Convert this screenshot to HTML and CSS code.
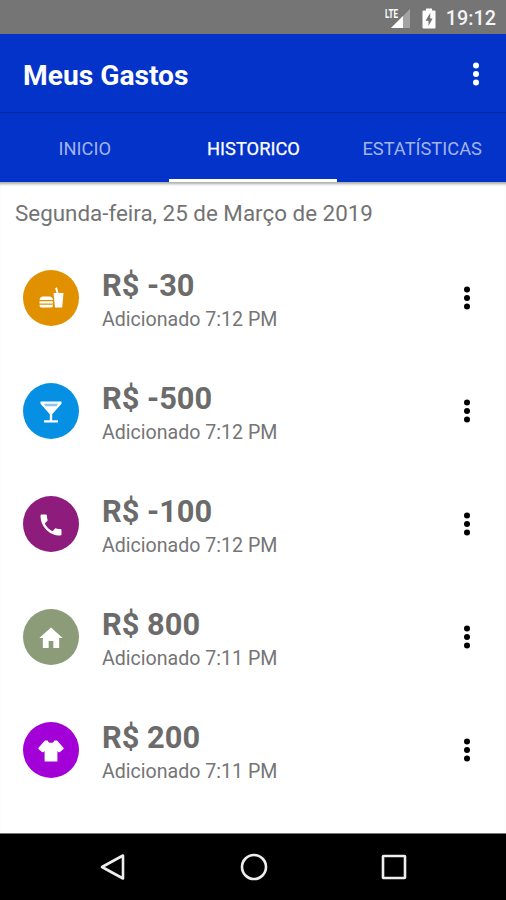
FILE: index.html
```html
<!DOCTYPE html>
<html lang="pt-BR">
<head>
<meta charset="utf-8">
<title>Meus Gastos</title>
<link rel="stylesheet" href="styles.css">
</head>
<body>
<svg class="defs" aria-hidden="true">
  <symbol id="more" viewBox="0 0 8 24"><circle cx="4" cy="3.500" r="3"/><circle cx="4" cy="12" r="3"/><circle cx="4" cy="20.500" r="3"/></symbol>
</svg>
<div class="screen">
  <div class="status">
    <svg class="signal" viewBox="0 0 28 22"><path class="dim" d="M25 2V21H6z"/><path d="M18 9V21H6z"/><rect class="mask" x="0" y="0" width="14" height="12"/><text x="0" y="11" textLength="13" lengthAdjust="spacingAndGlyphs">LTE</text></svg>
    <svg class="battery" viewBox="0 0 14 21"><path d="M4 0.500H10V2.500H12.500Q13.500 2.500 13.500 3.500V19.500Q13.500 20.500 12.500 20.500H1.500Q.5 20.500 .5 19.500V3.500Q.5 2.500 1.500 2.500H4z"/><path class="bolt" d="M8.200 5L3.500 12.700H6.500V18L10.600 10.500H8.200z"/></svg>
    <span class="time">19:12</span>
  </div>
  <header class="bar">
    <h1>Meus Gastos</h1>
    <svg class="more light"><use href="#more"/></svg>
  </header>
  <nav class="tabs">
    <span class="tab"><span>INICIO</span></span>
    <span class="tab active"><span>HISTORICO</span></span>
    <span class="tab"><span>ESTATÍSTICAS</span></span>
  </nav>
  <main>
    <h2>Segunda-feira, 25 de Março de 2019</h2>
    <ul>
      <li>
        <span class="badge food"><svg viewBox="0 0 28 28"><path d="M2.500 15Q3 11.500 6 11.500H12.500Q15.500 11.500 16 15zM2.500 16.200H16V18.500H2.500zM2.500 19.700H16V20.500Q16 22.500 14 22.500H4.500Q2.500 22.500 2.500 20.500zM16.500 8H19.700L18 3.200L20 2.300L21.500 8H26.500L25.200 22.500H18z"/></svg></span>
        <div class="info"><strong>R$ -30</strong><small>Adicionado 7:12 PM</small></div>
        <svg class="more"><use href="#more"/></svg>
      </li>
      <li>
        <span class="badge drink"><svg viewBox="0 0 24 24"><path d="M21 5V3H3v2l8 9v5H6v2h12v-2h-5v-5l8-9z"/><path class="liquid" d="M5.660 5h12.690l-1.780 2H7.430z"/></svg></span>
        <div class="info"><strong>R$ -500</strong><small>Adicionado 7:12 PM</small></div>
        <svg class="more"><use href="#more"/></svg>
      </li>
      <li>
        <span class="badge phone"><svg viewBox="0 0 24 24"><path d="M6.620 10.790c1.440 2.830 3.760 5.140 6.590 6.590l2.200-2.200c.27-.27.67-.36 1.020-.24 1.120.37 2.330.57 3.570.57.55 0 1 .45 1 1V20c0 .55-.45 1-1 1-9.390 0-17-7.610-17-17 0-.55.45-1 1-1h3.500c.55 0 1 .45 1 1 0 1.250.2 2.450.57 3.570.11.35.03.74-.25 1.020l-2.200 2.200z"/></svg></span>
        <div class="info"><strong>R$ -100</strong><small>Adicionado 7:12 PM</small></div>
        <svg class="more"><use href="#more"/></svg>
      </li>
      <li>
        <span class="badge home"><svg viewBox="0 0 24 24"><path d="M10 20.500v-6h4v6h5v-8.500h3L12 3 2 12h3v8.500z"/></svg></span>
        <div class="info"><strong>R$ 800</strong><small>Adicionado 7:11 PM</small></div>
        <svg class="more"><use href="#more"/></svg>
      </li>
      <li>
        <span class="badge clothes"><svg viewBox="0 0 24 24"><path d="M17.500 21H6.500v-8.930l-.8.720a1 1 0 0 1-1.410 0L1.460 10.460a1 1 0 0 1 0-1.410L6.800 3H9.200c.2 1.300 1.300 2 2.800 2S14.600 4.300 14.800 3h2.400l5.340 6.050a1 1 0 0 1 0 1.410l-2.830 2.330a1 1 0 0 1-1.410 0l-.8-.72z"/></svg></span>
        <div class="info"><strong>R$ 200</strong><small>Adicionado 7:11 PM</small></div>
        <svg class="more"><use href="#more"/></svg>
      </li>
    </ul>
  </main>
  <footer>
    <svg viewBox="0 0 28 28"><path d="M3 14L24 2.500V25.500z"/></svg>
    <svg viewBox="0 0 28 28"><circle cx="14" cy="14" r="12"/></svg>
    <svg viewBox="0 0 28 28"><rect x="3" y="3" width="22" height="22" rx=".5"/></svg>
  </footer>
</div>
</body>
</html>
```
FILE: styles.css
```css
* { box-sizing: border-box; }
body { margin: 0; font-family: Roboto, sans-serif; background: #fff; }
.defs { position: absolute; width: 0; height: 0; }
.screen { width: 506px; height: 900px; display: flex; flex-direction: column; overflow: hidden; }
.status { height: 34px; background: #757575; display: flex; align-items: center; justify-content: flex-end; padding: 2px 10px 0 0; color: #fff; flex: none; }
.signal { width: 28px; height: 22px; fill: #fff; margin-right: 9px; overflow: visible; }
.signal .dim { fill: #a3a3a3; }
.signal .mask { fill: #757575; }
.signal text { font: bold 13px Roboto, sans-serif; }
.battery { width: 14px; height: 21px; fill: #fff; margin-right: 10px; }
.battery .bolt { fill: #757575; }
.time { font-size: 19.8px; font-weight: 500; line-height: 24px; color: #f4f4f4; padding-top: 1px; }
.bar { height: 79px; flex: none; background: #0433c9; display: flex; align-items: center; justify-content: space-between; padding: 4px 26px 0 23px; box-shadow: inset 0 -2px 1px -1px #0328a0; }
h1 { margin: 0; font-size: 28.2px; font-weight: 700; color: #fff; line-height: 32px; }
.more { width: 8px; height: 24px; fill: #000; flex: none; }
.more.light { fill: #fff; margin-bottom: 4px; }
.tabs { height: 70px; margin-bottom: -1px; flex: none; background: linear-gradient(#0433c9 69px, transparent 69px); display: grid; grid-template-columns: repeat(3, 1fr); }
.tab { display: flex; align-items: center; justify-content: center; color: #a3b3ec; padding: 4px 0 0 1px; border-bottom: 4px solid transparent; }
.tab span { font-size: 18.3px; }
.tab.active { color: #fff; border-color: #fff; -webkit-text-stroke: .25px #fff; }
main { flex: 1; box-shadow: inset 0 4px 3px -2px rgba(0,0,0,.35); }
h2 { margin: 0; height: 59px; padding: 17px 15px 0; font-size: 22.4px; line-height: 28px; font-weight: 400; color: #737373; }
ul { list-style: none; margin: 0; padding: 0; }
li { height: 113px; display: flex; align-items: center; padding: 0 35px 0 23px; }
.badge { width: 56px; height: 56px; border-radius: 50%; display: grid; place-items: center; padding-top: 2px; flex: none; }
.badge svg { width: 28px; height: 28px; fill: #fff; }
.food { background: #e19000; }
.drink { background: #0590e4; }
.badge .liquid { fill: #8ec4ef; }
.phone { background: #8d1c7c; }
.home { background: #8c9b78; }
.clothes { background: #a200d6; }
.info { flex: 1; padding: 7px 0 0 23px; display: flex; flex-direction: column; color: #6b6b6b; }
.info strong { font-size: 30.8px; line-height: 36px; font-weight: 700; }
.info small { margin-top: 1px; font-size: 19.6px; line-height: 29px; color: #757575; }
footer { height: 67px; flex: none; background: #000; border-top: 1px solid #777; display: flex; justify-content: space-between; align-items: center; padding: 0 98px 0 99px; }
footer svg { width: 28px; height: 28px; fill: none; stroke: #eee; stroke-width: 2.6; stroke-linejoin: round; }
```
